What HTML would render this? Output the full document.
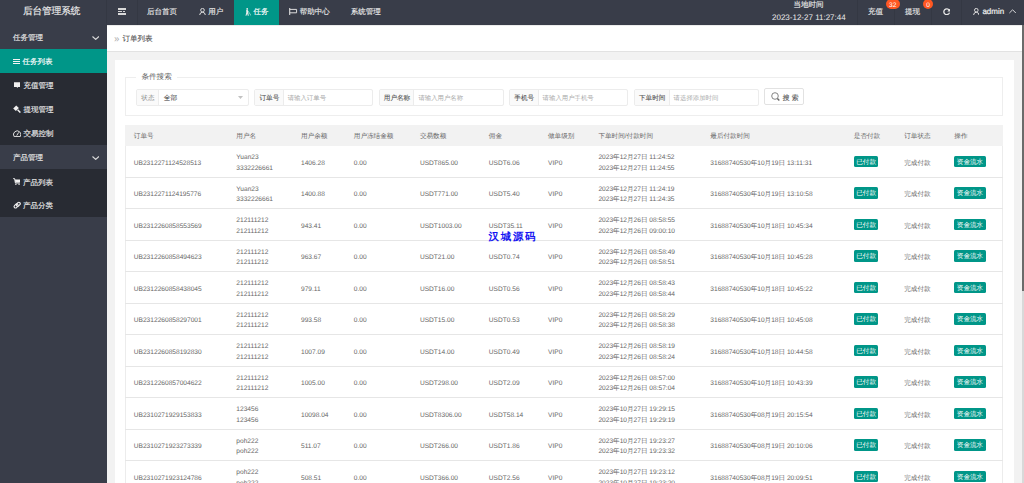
<!DOCTYPE html>
<html><head><meta charset="utf-8">
<style>
*{margin:0;padding:0;box-sizing:border-box}
html,body{width:1024px;height:483px;overflow:hidden;background:#f2f2f2;font-family:"Liberation Sans",sans-serif;text-rendering:geometricPrecision}
.a{position:absolute}
.t{position:absolute;white-space:nowrap;height:12px;line-height:12px}
.th,.td{font-size:6.6px;color:#666}
#hdr{position:absolute;left:0;top:0;width:1024px;height:24.8px;background:#393d49}
.hs{position:absolute;top:0;width:1px;height:24.8px;background:rgba(0,0,0,.08)}
.hn{color:#e6e6e6;font-size:7.5px;-webkit-text-stroke-width:0.15px}
#side{position:absolute;left:0;top:24.8px;width:106.6px;height:459px;background:#393d49}
.sc{position:absolute;left:0;width:106.6px;background:#282b33}
.sn{color:#e6e6e6;font-size:7.5px;-webkit-text-stroke-width:0.15px}
#crumb{position:absolute;left:106.6px;top:24.8px;width:915.4px;height:26.8px;background:#fff;border-bottom:1px solid #e2e2e2;border-top:1px solid #ececec}
#card{position:absolute;left:114.8px;top:60px;width:899px;height:430px;background:#fff}
#fs{position:absolute;left:125.2px;top:76.6px;width:878px;height:39.5px;border:1px solid #eeeeee}
.grp{position:absolute;top:88.6px;height:17px;border:1px solid #ececec;background:#fff;border-radius:2px;overflow:hidden}.lbg{position:absolute;left:0;top:0;bottom:0;background:#fafafa;border-right:1px solid #ececec}
.lt{font-size:6.6px;color:#555;-webkit-text-stroke-width:0.1px}
.ph{font-size:6.4px;color:#aaa}
.thead{position:absolute;background:#f2f2f2}
.rline{position:absolute;height:1px;background:#e6e6e6}
.badge{position:absolute;height:11.8px;background:#009688;color:#fff;font-size:6.6px;line-height:14.6px;text-align:center;border-radius:1.5px}
</style></head><body>
<div id="hdr">
  <div class="t" style="left:22.9px;top:6.1px;font-size:9.6px;color:#efefef;-webkit-text-stroke-width:0.15px">后台管理系统</div>
  <div class="hs" style="left:106px"></div>
  <div class="hs" style="left:136.5px"></div>
  <div class="a" style="left:118px;top:8.2px;width:7.6px;height:1.6px;background:#d8d8d8"></div>
  <div class="a" style="left:118px;top:10.9px;width:4.2px;height:1.3px;background:#d8d8d8"></div>
  <div class="a" style="left:123.2px;top:10.9px;width:1.8px;height:1.3px;background:#d8d8d8"></div>
  <div class="a" style="left:118px;top:13.2px;width:7.6px;height:1.6px;background:#d8d8d8"></div>
  <div class="t hn" style="left:147px;top:6.3px">后台首页</div>
  <svg class="a" style="left:198.6px;top:7.8px" width="7" height="7.4" viewBox="0 0 7 7.4"><circle cx="3.5" cy="2.2" r="1.8" fill="none" stroke="#ddd" stroke-width="1"/><path d="M0.6 7.2 Q1 4.2 3.5 4.2 Q6 4.2 6.4 7.2" fill="none" stroke="#ddd" stroke-width="1"/></svg>
  <div class="t hn" style="left:208.2px;top:6.3px">用户</div>
  <div class="a" style="left:233.9px;top:0;width:45px;height:24.8px;background:#009688"></div>
  <svg class="a" style="left:244.6px;top:8px" width="6.5" height="8" viewBox="0 0 6.5 8"><circle cx="2.2" cy="0.9" r="0.9" fill="#eee"/><path d="M1.2 2 L2.8 2 L3.2 4.6 L3.8 7.8 L2.8 7.8 L2.2 5.6 L1.4 7.8 L0.5 7.8 L1.3 4.6 Z" fill="#eee"/><path d="M2.8 2.6 L6.2 7.8" stroke="#cfe" stroke-width="0.6"/></svg>
  <div class="t hn" style="left:253.4px;top:6.3px;color:#fff">任务</div>
  <svg class="a" style="left:289.4px;top:8px" width="8.2" height="7" viewBox="0 0 8.2 7"><path d="M0.7 0 V7" stroke="#ddd" stroke-width="1.1"/><path d="M0.7 1.4 H7.6 V4.8 H0.7" fill="none" stroke="#ddd" stroke-width="1"/></svg>
  <div class="t hn" style="left:299.7px;top:6.3px">帮助中心</div>
  <div class="t hn" style="left:350.8px;top:6.3px">系统管理</div>

  <div class="t hn" style="left:793.5px;top:-1px">当地时间</div>
  <div class="t" style="left:772px;top:11.9px;font-size:8px;font-weight:500;color:#ededed">2023-12-27 11:27:44</div>
  <div class="hs" style="left:857px"></div>
  <div class="t hn" style="left:868px;top:6.3px">充值</div>
  <div class="hs" style="left:894px"></div>
  <div class="a" style="left:885.6px;top:-0.6px;width:14.1px;height:9.4px;border-radius:5px;background:#ff5722;color:#fff;font-size:6.6px;line-height:13.8px;text-align:center">32</div>
  <div class="t hn" style="left:905px;top:6.3px">提现</div>
  <div class="hs" style="left:930.6px"></div>
  <div class="a" style="left:922.9px;top:-0.6px;width:10.5px;height:9.4px;border-radius:5px;background:#ff5722;color:#fff;font-size:6.6px;line-height:13.8px;text-align:center">0</div>
  <svg class="a" style="left:942.6px;top:8px" width="7.4" height="7.2" viewBox="0 0 7.4 7.2"><path d="M6.2 2.2 A2.9 2.9 0 1 0 6.5 4.6" fill="none" stroke="#e8e8e8" stroke-width="1.3"/><path d="M7.3 0.2 L7.3 3.4 L4.3 3.4 Z" fill="#e8e8e8"/></svg>
  <div class="hs" style="left:961.3px"></div>
  <svg class="a" style="left:972.8px;top:7.8px" width="6.6" height="7.4" viewBox="0 0 6.6 7.4"><circle cx="3.3" cy="2.2" r="1.8" fill="none" stroke="#ddd" stroke-width="1"/><path d="M0.5 7.2 Q0.9 4.2 3.3 4.2 Q5.7 4.2 6.1 7.2" fill="none" stroke="#ddd" stroke-width="1"/></svg>
  <div class="t" style="left:982.4px;top:6.2px;font-size:8px;color:#f0f0f0;-webkit-text-stroke-width:0.2px">admin</div>
  <svg class="a" style="left:1008.9px;top:9.4px" width="7.2" height="4.4" viewBox="0 0 7.2 4.4"><path d="M0.4 4 L3.6 0.8 L6.8 4" fill="none" stroke="#ddd" stroke-width="1"/></svg>
</div>
<div class="a" style="left:1022px;top:24.8px;width:2px;height:460px;background:#d9d9d9"></div><div class="a" style="left:1022px;top:24.8px;width:2px;height:265.9px;background:#6b6b6b"></div>

<div id="side">
  <div class="sc" style="top:24.2px;height:96.2px"></div>
  <div class="a" style="left:0;top:24.2px;width:106.6px;height:24px;background:#009688"></div>
  <div class="sc" style="top:144.3px;height:47.7px"></div>
</div>
<div class="t sn" style="left:12.9px;top:32px">任务管理</div>
<svg class="a" style="left:91.6px;top:36px" width="7.4" height="4" viewBox="0 0 7.4 4"><path d="M0.5 0.5 L3.7 3.4 L6.9 0.5" fill="none" stroke="#d8d8d8" stroke-width="1.15"/></svg>
<div class="a" style="left:13px;top:58.9px;width:6.9px;height:1px;background:#f4f4f4"></div>
<div class="a" style="left:13px;top:61px;width:6.9px;height:1px;background:#f4f4f4"></div>
<div class="a" style="left:13px;top:63.1px;width:6.9px;height:1px;background:#f4f4f4"></div>
<div class="t sn" style="left:22.4px;top:56.4px;color:#fff">任务列表</div>
<svg class="a" style="left:13.6px;top:82px" width="6.8" height="6" viewBox="0 0 6.8 6"><path d="M0 0.3 H6.7 V4.9 H4 L3.3 6 L2.6 4.9 H0 Z" fill="#f0f0f0"/></svg>
<div class="t sn" style="left:23.6px;top:80px">充值管理</div>
<svg class="a" style="left:13px;top:105.4px" width="8" height="8" viewBox="0 0 8 8"><path d="M0.2 3.4 L3.2 0.4 L5.9 3.1 L2.9 6.1 Z" fill="#f0f0f0"/><path d="M4.6 4.8 L7.4 7.6" stroke="#f0f0f0" stroke-width="1.4"/></svg>
<div class="t sn" style="left:23.6px;top:104.1px">提现管理</div>
<svg class="a" style="left:12.8px;top:129.8px" width="8.4" height="7.2" viewBox="0 0 8.4 7.2"><path d="M1.1 6.6 A3.7 3.7 0 1 1 7.3 6.6 Z" fill="none" stroke="#e0e0e0" stroke-width="1"/><path d="M3.7 5.6 L5.7 2.4" stroke="#e0e0e0" stroke-width="1"/></svg>
<div class="t sn" style="left:23.6px;top:128.2px">交易控制</div>
<div class="t sn" style="left:12.9px;top:152.3px">产品管理</div>
<svg class="a" style="left:91.6px;top:155.8px" width="7.4" height="4" viewBox="0 0 7.4 4"><path d="M0.5 0.5 L3.7 3.4 L6.9 0.5" fill="none" stroke="#d8d8d8" stroke-width="1.15"/></svg>
<svg class="a" style="left:13px;top:178px" width="7.4" height="7" viewBox="0 0 7.4 7"><path d="M0.2 0.6 H1.6 L2.4 5 H6.8" fill="none" stroke="#eee" stroke-width="1"/><path d="M1.9 1.4 H7.3 L6.8 4.4 H2.4 Z" fill="#f2f2f2"/><circle cx="2.9" cy="6.2" r="0.75" fill="#eee"/><circle cx="6.1" cy="6.2" r="0.75" fill="#eee"/></svg>
<div class="t sn" style="left:22.9px;top:176.6px">产品列表</div>
<svg class="a" style="left:12.9px;top:201px" width="8.4" height="8.4" viewBox="0 0 8.4 8.4"><g fill="none" stroke="#eee" stroke-width="1.1"><rect x="0.9" y="3.6" width="4.4" height="2.8" rx="1.4" transform="rotate(-45 3.1 5)"/><rect x="3.1" y="1.9" width="4.4" height="2.8" rx="1.4" transform="rotate(-45 5.3 3.3)"/></g></svg>
<div class="t sn" style="left:22.9px;top:200.2px">产品分类</div>

<div id="crumb">
  <div class="t" style="left:7.9px;top:7.4px;font-size:10.5px;color:#aaa;transform:scaleX(0.9);transform-origin:0 0">»</div>
  <div class="t" style="left:16px;top:7.4px;font-size:7.5px;color:#555;-webkit-text-stroke-width:0.12px">订单列表</div>
</div>

<div id="card"></div>
<div id="fs"></div>
<div class="a" style="left:135.5px;top:73px;width:41.5px;height:8px;background:#fff"></div>
<div class="t" style="left:141.4px;top:70.7px;font-size:7.6px;color:#666">条件搜索</div>

<div class="grp" style="left:136.2px;width:112.5px"><div class="lbg" style="width:22.3px"></div></div>
<div class="t lt" style="left:141.3px;top:92.6px;color:#888;-webkit-text-stroke-width:0">状态</div>
<div class="t" style="left:163.7px;top:92.6px;font-size:6.8px;color:#333">全部</div>
<div class="grp" style="left:254.4px;width:118.4px"><div class="lbg" style="width:28.3px"></div></div>
<div class="t lt" style="left:259.5px;top:92.6px">订单号</div>
<div class="t ph" style="left:287.7px;top:92.6px">请输入订单号</div>
<div class="grp" style="left:378.7px;width:124.9px"><div class="lbg" style="width:34.7px"></div></div>
<div class="t lt" style="left:383.8px;top:92.6px">用户名称</div>
<div class="t ph" style="left:418.4px;top:92.6px">请输入用户名称</div>
<div class="grp" style="left:509.2px;width:118.8px"><div class="lbg" style="width:28.4px"></div></div>
<div class="t lt" style="left:514.3px;top:92.6px">手机号</div>
<div class="t ph" style="left:542.6px;top:92.6px">请输入用户手机号</div>
<div class="grp" style="left:633.9px;width:124.7px"><div class="lbg" style="width:34.7px"></div></div>
<div class="t lt" style="left:639.0px;top:92.6px">下单时间</div>
<div class="t ph" style="left:673.6px;top:92.6px">请选择添加时间</div>
<svg class="a" style="left:237.6px;top:95.6px" width="5" height="3" viewBox="0 0 5 3"><path d="M0 0 H5 L2.5 3 Z" fill="#c2c2c2"/></svg>

<div class="a" style="left:764.4px;top:88.3px;width:39.4px;height:17.2px;border:1px solid #e2e2e2;background:#fff;border-radius:2px"></div>
<svg class="a" style="left:770.5px;top:92px" width="9" height="9.5" viewBox="0 0 9 9.5"><circle cx="4" cy="4" r="3.3" fill="none" stroke="#777" stroke-width="0.9"/><path d="M6.4 6.6 L8.3 8.6" stroke="#666" stroke-width="1.4"/></svg>
<div class="t" style="left:782.7px;top:93.1px;font-size:6.8px;color:#555;-webkit-text-stroke-width:0.15px;letter-spacing:2.2px">搜索</div>

<div class="a" style="left:125.2px;top:124.6px;width:878.3px;height:400px;border-left:1px solid #ececec;border-right:1px solid #ececec"></div>
<div class="thead" style="left:125.2px;top:124.6px;width:878.3px;height:21.15px"></div>
<div class="t th" style="left:133.8px;top:131.475px;">订单号</div>
<div class="t th" style="left:236.3px;top:131.475px;">用户名</div>
<div class="t th" style="left:301px;top:131.475px;">用户余额</div>
<div class="t th" style="left:353.8px;top:131.475px;">用户冻结金额</div>
<div class="t th" style="left:419.9px;top:131.475px;">交易数额</div>
<div class="t th" style="left:488.8px;top:131.475px;">佣金</div>
<div class="t th" style="left:548px;top:131.475px;">做单级别</div>
<div class="t th" style="left:598.4px;top:131.475px;">下单时间/付款时间</div>
<div class="t th" style="left:710.3px;top:131.475px;">最后付款时间</div>
<div class="t th" style="left:853.8px;top:131.475px;">是否付款</div>
<div class="t th" style="left:904.2px;top:131.475px;">订单状态</div>
<div class="t th" style="left:954.3px;top:131.475px;">操作</div>
<div class="rline" style="left:125.2px;top:176.75px;width:878.3px"></div>
<div class="t td" style="left:133.8px;top:157.6px;">UB2312271124528513</div>
<div class="t td" style="left:236.3px;top:152.29999999999998px;">Yuan23</div>
<div class="t td" style="left:236.3px;top:162.9px;">3332226661</div>
<div class="t td" style="left:301px;top:157.6px;">1406.28</div>
<div class="t td" style="left:353.8px;top:157.6px;">0.00</div>
<div class="t td" style="left:419.9px;top:157.6px;">USDT865.00</div>
<div class="t td" style="left:488.8px;top:157.6px;">USDT6.06</div>
<div class="t td" style="left:548px;top:157.6px;">VIP0</div>
<div class="t td" style="left:598.4px;top:152.29999999999998px;">2023年12月27日 11:24:52</div>
<div class="t td" style="left:598.4px;top:162.9px;">2023年12月27日 11:24:55</div>
<div class="t td" style="left:710.3px;top:157.6px;">31688740530年10月19日 13:11:31</div>
<div class="badge" style="left:853.8px;top:155.70px;width:24.6px">已付款</div>
<div class="t td" style="left:904.2px;top:157.6px;">完成付款</div>
<div class="badge" style="left:954.3px;top:155.70px;width:31.4px">资金流水</div>
<div class="rline" style="left:125.2px;top:208.25px;width:878.3px"></div>
<div class="t td" style="left:133.8px;top:189.1px;">UB2312271124195776</div>
<div class="t td" style="left:236.3px;top:183.79999999999998px;">Yuan23</div>
<div class="t td" style="left:236.3px;top:194.4px;">3332226661</div>
<div class="t td" style="left:301px;top:189.1px;">1400.88</div>
<div class="t td" style="left:353.8px;top:189.1px;">0.00</div>
<div class="t td" style="left:419.9px;top:189.1px;">USDT771.00</div>
<div class="t td" style="left:488.8px;top:189.1px;">USDT5.40</div>
<div class="t td" style="left:548px;top:189.1px;">VIP0</div>
<div class="t td" style="left:598.4px;top:183.79999999999998px;">2023年12月27日 11:24:19</div>
<div class="t td" style="left:598.4px;top:194.4px;">2023年12月27日 11:24:35</div>
<div class="t td" style="left:710.3px;top:189.1px;">31688740530年10月19日 13:10:58</div>
<div class="badge" style="left:853.8px;top:187.20px;width:24.6px">已付款</div>
<div class="t td" style="left:904.2px;top:189.1px;">完成付款</div>
<div class="badge" style="left:954.3px;top:187.20px;width:31.4px">资金流水</div>
<div class="rline" style="left:125.2px;top:239.75px;width:878.3px"></div>
<div class="t td" style="left:133.8px;top:220.6px;">UB2312260858553569</div>
<div class="t td" style="left:236.3px;top:215.29999999999998px;">212111212</div>
<div class="t td" style="left:236.3px;top:225.9px;">212111212</div>
<div class="t td" style="left:301px;top:220.6px;">943.41</div>
<div class="t td" style="left:353.8px;top:220.6px;">0.00</div>
<div class="t td" style="left:419.9px;top:220.6px;">USDT1003.00</div>
<div class="t td" style="left:488.8px;top:220.6px;">USDT35.11</div>
<div class="t td" style="left:548px;top:220.6px;">VIP0</div>
<div class="t td" style="left:598.4px;top:215.29999999999998px;">2023年12月26日 08:58:55</div>
<div class="t td" style="left:598.4px;top:225.9px;">2023年12月26日 09:00:10</div>
<div class="t td" style="left:710.3px;top:220.6px;">31688740530年10月18日 10:45:34</div>
<div class="badge" style="left:853.8px;top:218.70px;width:24.6px">已付款</div>
<div class="t td" style="left:904.2px;top:220.6px;">完成付款</div>
<div class="badge" style="left:954.3px;top:218.70px;width:31.4px">资金流水</div>
<div class="rline" style="left:125.2px;top:271.25px;width:878.3px"></div>
<div class="t td" style="left:133.8px;top:252.10000000000002px;">UB2312260858494623</div>
<div class="t td" style="left:236.3px;top:246.8px;">212111212</div>
<div class="t td" style="left:236.3px;top:257.40000000000003px;">212111212</div>
<div class="t td" style="left:301px;top:252.10000000000002px;">963.67</div>
<div class="t td" style="left:353.8px;top:252.10000000000002px;">0.00</div>
<div class="t td" style="left:419.9px;top:252.10000000000002px;">USDT21.00</div>
<div class="t td" style="left:488.8px;top:252.10000000000002px;">USDT0.74</div>
<div class="t td" style="left:548px;top:252.10000000000002px;">VIP0</div>
<div class="t td" style="left:598.4px;top:246.8px;">2023年12月26日 08:58:49</div>
<div class="t td" style="left:598.4px;top:257.40000000000003px;">2023年12月26日 08:58:51</div>
<div class="t td" style="left:710.3px;top:252.10000000000002px;">31688740530年10月18日 10:45:28</div>
<div class="badge" style="left:853.8px;top:250.20px;width:24.6px">已付款</div>
<div class="t td" style="left:904.2px;top:252.10000000000002px;">完成付款</div>
<div class="badge" style="left:954.3px;top:250.20px;width:31.4px">资金流水</div>
<div class="rline" style="left:125.2px;top:302.75px;width:878.3px"></div>
<div class="t td" style="left:133.8px;top:283.6px;">UB2312260858438045</div>
<div class="t td" style="left:236.3px;top:278.3px;">212111212</div>
<div class="t td" style="left:236.3px;top:288.90000000000003px;">212111212</div>
<div class="t td" style="left:301px;top:283.6px;">979.11</div>
<div class="t td" style="left:353.8px;top:283.6px;">0.00</div>
<div class="t td" style="left:419.9px;top:283.6px;">USDT16.00</div>
<div class="t td" style="left:488.8px;top:283.6px;">USDT0.56</div>
<div class="t td" style="left:548px;top:283.6px;">VIP0</div>
<div class="t td" style="left:598.4px;top:278.3px;">2023年12月26日 08:58:43</div>
<div class="t td" style="left:598.4px;top:288.90000000000003px;">2023年12月26日 08:58:44</div>
<div class="t td" style="left:710.3px;top:283.6px;">31688740530年10月18日 10:45:22</div>
<div class="badge" style="left:853.8px;top:281.70px;width:24.6px">已付款</div>
<div class="t td" style="left:904.2px;top:283.6px;">完成付款</div>
<div class="badge" style="left:954.3px;top:281.70px;width:31.4px">资金流水</div>
<div class="rline" style="left:125.2px;top:334.25px;width:878.3px"></div>
<div class="t td" style="left:133.8px;top:315.1px;">UB2312260858297001</div>
<div class="t td" style="left:236.3px;top:309.8px;">212111212</div>
<div class="t td" style="left:236.3px;top:320.40000000000003px;">212111212</div>
<div class="t td" style="left:301px;top:315.1px;">993.58</div>
<div class="t td" style="left:353.8px;top:315.1px;">0.00</div>
<div class="t td" style="left:419.9px;top:315.1px;">USDT15.00</div>
<div class="t td" style="left:488.8px;top:315.1px;">USDT0.53</div>
<div class="t td" style="left:548px;top:315.1px;">VIP0</div>
<div class="t td" style="left:598.4px;top:309.8px;">2023年12月26日 08:58:29</div>
<div class="t td" style="left:598.4px;top:320.40000000000003px;">2023年12月26日 08:58:38</div>
<div class="t td" style="left:710.3px;top:315.1px;">31688740530年10月18日 10:45:08</div>
<div class="badge" style="left:853.8px;top:313.20px;width:24.6px">已付款</div>
<div class="t td" style="left:904.2px;top:315.1px;">完成付款</div>
<div class="badge" style="left:954.3px;top:313.20px;width:31.4px">资金流水</div>
<div class="rline" style="left:125.2px;top:365.75px;width:878.3px"></div>
<div class="t td" style="left:133.8px;top:346.6px;">UB2312260858192830</div>
<div class="t td" style="left:236.3px;top:341.3px;">212111212</div>
<div class="t td" style="left:236.3px;top:351.90000000000003px;">212111212</div>
<div class="t td" style="left:301px;top:346.6px;">1007.09</div>
<div class="t td" style="left:353.8px;top:346.6px;">0.00</div>
<div class="t td" style="left:419.9px;top:346.6px;">USDT14.00</div>
<div class="t td" style="left:488.8px;top:346.6px;">USDT0.49</div>
<div class="t td" style="left:548px;top:346.6px;">VIP0</div>
<div class="t td" style="left:598.4px;top:341.3px;">2023年12月26日 08:58:19</div>
<div class="t td" style="left:598.4px;top:351.90000000000003px;">2023年12月26日 08:58:24</div>
<div class="t td" style="left:710.3px;top:346.6px;">31688740530年10月18日 10:44:58</div>
<div class="badge" style="left:853.8px;top:344.70px;width:24.6px">已付款</div>
<div class="t td" style="left:904.2px;top:346.6px;">完成付款</div>
<div class="badge" style="left:954.3px;top:344.70px;width:31.4px">资金流水</div>
<div class="rline" style="left:125.2px;top:397.25px;width:878.3px"></div>
<div class="t td" style="left:133.8px;top:378.1px;">UB2312260857004622</div>
<div class="t td" style="left:236.3px;top:372.8px;">212111212</div>
<div class="t td" style="left:236.3px;top:383.40000000000003px;">212111212</div>
<div class="t td" style="left:301px;top:378.1px;">1005.00</div>
<div class="t td" style="left:353.8px;top:378.1px;">0.00</div>
<div class="t td" style="left:419.9px;top:378.1px;">USDT298.00</div>
<div class="t td" style="left:488.8px;top:378.1px;">USDT2.09</div>
<div class="t td" style="left:548px;top:378.1px;">VIP0</div>
<div class="t td" style="left:598.4px;top:372.8px;">2023年12月26日 08:57:00</div>
<div class="t td" style="left:598.4px;top:383.40000000000003px;">2023年12月26日 08:57:04</div>
<div class="t td" style="left:710.3px;top:378.1px;">31688740530年10月18日 10:43:39</div>
<div class="badge" style="left:853.8px;top:376.20px;width:24.6px">已付款</div>
<div class="t td" style="left:904.2px;top:378.1px;">完成付款</div>
<div class="badge" style="left:954.3px;top:376.20px;width:31.4px">资金流水</div>
<div class="rline" style="left:125.2px;top:428.75px;width:878.3px"></div>
<div class="t td" style="left:133.8px;top:409.6px;">UB2310271929153833</div>
<div class="t td" style="left:236.3px;top:404.3px;">123456</div>
<div class="t td" style="left:236.3px;top:414.90000000000003px;">123456</div>
<div class="t td" style="left:301px;top:409.6px;">10098.04</div>
<div class="t td" style="left:353.8px;top:409.6px;">0.00</div>
<div class="t td" style="left:419.9px;top:409.6px;">USDT8306.00</div>
<div class="t td" style="left:488.8px;top:409.6px;">USDT58.14</div>
<div class="t td" style="left:548px;top:409.6px;">VIP0</div>
<div class="t td" style="left:598.4px;top:404.3px;">2023年10月27日 19:29:15</div>
<div class="t td" style="left:598.4px;top:414.90000000000003px;">2023年10月27日 19:29:19</div>
<div class="t td" style="left:710.3px;top:409.6px;">31688740530年08月19日 20:15:54</div>
<div class="badge" style="left:853.8px;top:407.70px;width:24.6px">已付款</div>
<div class="t td" style="left:904.2px;top:409.6px;">完成付款</div>
<div class="badge" style="left:954.3px;top:407.70px;width:31.4px">资金流水</div>
<div class="rline" style="left:125.2px;top:460.25px;width:878.3px"></div>
<div class="t td" style="left:133.8px;top:441.1px;">UB2310271923273339</div>
<div class="t td" style="left:236.3px;top:435.8px;">poh222</div>
<div class="t td" style="left:236.3px;top:446.40000000000003px;">poh222</div>
<div class="t td" style="left:301px;top:441.1px;">511.07</div>
<div class="t td" style="left:353.8px;top:441.1px;">0.00</div>
<div class="t td" style="left:419.9px;top:441.1px;">USDT266.00</div>
<div class="t td" style="left:488.8px;top:441.1px;">USDT1.86</div>
<div class="t td" style="left:548px;top:441.1px;">VIP0</div>
<div class="t td" style="left:598.4px;top:435.8px;">2023年10月27日 19:23:27</div>
<div class="t td" style="left:598.4px;top:446.40000000000003px;">2023年10月27日 19:23:32</div>
<div class="t td" style="left:710.3px;top:441.1px;">31688740530年08月19日 20:10:06</div>
<div class="badge" style="left:853.8px;top:439.20px;width:24.6px">已付款</div>
<div class="t td" style="left:904.2px;top:441.1px;">完成付款</div>
<div class="badge" style="left:954.3px;top:439.20px;width:31.4px">资金流水</div>
<div class="rline" style="left:125.2px;top:491.75px;width:878.3px"></div>
<div class="t td" style="left:133.8px;top:472.6px;">UB2310271923124786</div>
<div class="t td" style="left:236.3px;top:467.3px;">poh222</div>
<div class="t td" style="left:236.3px;top:477.90000000000003px;">poh222</div>
<div class="t td" style="left:301px;top:472.6px;">508.51</div>
<div class="t td" style="left:353.8px;top:472.6px;">0.00</div>
<div class="t td" style="left:419.9px;top:472.6px;">USDT366.00</div>
<div class="t td" style="left:488.8px;top:472.6px;">USDT2.56</div>
<div class="t td" style="left:548px;top:472.6px;">VIP0</div>
<div class="t td" style="left:598.4px;top:467.3px;">2023年10月27日 19:23:12</div>
<div class="t td" style="left:598.4px;top:477.90000000000003px;">2023年10月27日 19:23:20</div>
<div class="t td" style="left:710.3px;top:472.6px;">31688740530年08月19日 20:09:51</div>
<div class="badge" style="left:853.8px;top:470.70px;width:24.6px">已付款</div>
<div class="t td" style="left:904.2px;top:472.6px;">完成付款</div>
<div class="badge" style="left:954.3px;top:470.70px;width:31.4px">资金流水</div>

<div class="a" style="left:488.6px;top:232.2px;font-size:10.4px;font-weight:900;color:#1414f2;line-height:12px;letter-spacing:1.75px;white-space:nowrap">汉城源码</div>
</body></html>
